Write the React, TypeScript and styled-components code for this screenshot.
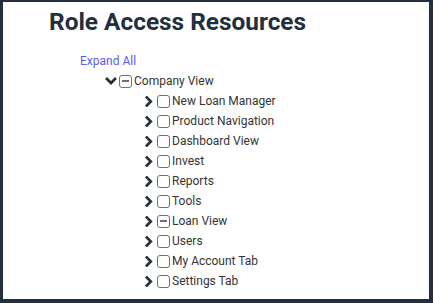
import React from "react";
import styled, { createGlobalStyle } from "styled-components";

const Global = createGlobalStyle`
  html, body { margin: 0; padding: 0; background: #232f3e; }
  body { font-family: Roboto, "Liberation Sans", Arial, sans-serif; }
  * { box-sizing: border-box; }
`;

const Panel = styled.div`
  margin: 2px 4px 0 3px;
  height: 297px;
  background: #ffffff;
  padding: 0 0 0 46px;
  overflow: hidden;
`;

const Title = styled.h1`
  margin: 0;
  height: 49px;
  padding-top: 5px;
  font-size: 24.4px;
  line-height: 30px;
  font-weight: 700;
  color: #232f3e;
`;

const ExpandLink = styled.a`
  display: block;
  margin-left: 31px;
  height: 20px;
  line-height: 20px;
  font-size: 12px;
  color: #5b5bf2;
  text-decoration: none;
  cursor: pointer;
`;

const List = styled.ul<{ $indent: number }>`
  list-style: none;
  margin: 0;
  padding: 0 0 0 ${(p) => p.$indent}px;
`;

const Row = styled.div`
  display: flex;
  align-items: center;
  height: 20px;
`;

const Toggle = styled.span<{ $w: number }>`
  width: ${(p) => p.$w}px;
  flex: none;
  display: flex;
  align-items: center;
  justify-content: flex-start;
  color: #232f3e;
`;

const Box = styled.span<{ $partial?: boolean }>`
  width: 13px;
  height: 13px;
  border: 1px solid #707070;
  border-radius: 3px;
  background: #fff;
  position: relative;
  margin-right: 2px;
  flex: none;
  &::after {
    content: "";
    display: ${(p) => (p.$partial ? "block" : "none")};
    position: absolute;
    left: 2px;
    right: 2px;
    top: 4px;
    height: 2px;
    background: #707070;
  }
`;

const Label = styled.span`
  font-size: 12px;
  color: #333333;
  line-height: 20px;
  white-space: nowrap;
`;

const ChevronDown = () => (
  <svg width="12" height="9" viewBox="0 0 12 9">
    <polyline points="2,2 6,6 10,2" fill="none" stroke="currentColor" strokeWidth="2.7" strokeLinecap="square" />
  </svg>
);

const ChevronRight = () => (
  <svg width="8" height="11" viewBox="0 0 8 11">
    <polyline points="1.8,1.5 5.8,5.5 1.8,9.5" fill="none" stroke="currentColor" strokeWidth="2.7" strokeLinecap="square" />
  </svg>
);

const children: { name: string; partial?: boolean }[] = [
  { name: "New Loan Manager" },
  { name: "Product Navigation" },
  { name: "Dashboard View" },
  { name: "Invest" },
  { name: "Reports" },
  { name: "Tools" },
  { name: "Loan View", partial: true },
  { name: "Users" },
  { name: "My Account Tab" },
  { name: "Settings Tab" },
];

export default function App() {
  return (
    <>
      <Global />
      <Panel>
        <Title>Role Access Resources</Title>
        <ExpandLink>Expand All</ExpandLink>
        <List $indent={56}>
          <li>
            <Row>
              <Toggle $w={14}>
                <ChevronDown />
              </Toggle>
              <Box $partial />
              <Label>Company View</Label>
            </Row>
            <List $indent={40}>
              {children.map((c) => (
                <li key={c.name}>
                  <Row>
                    <Toggle $w={12}>
                      <ChevronRight />
                    </Toggle>
                    <Box $partial={c.partial} />
                    <Label>{c.name}</Label>
                  </Row>
                </li>
              ))}
            </List>
          </li>
        </List>
      </Panel>
    </>
  );
}
